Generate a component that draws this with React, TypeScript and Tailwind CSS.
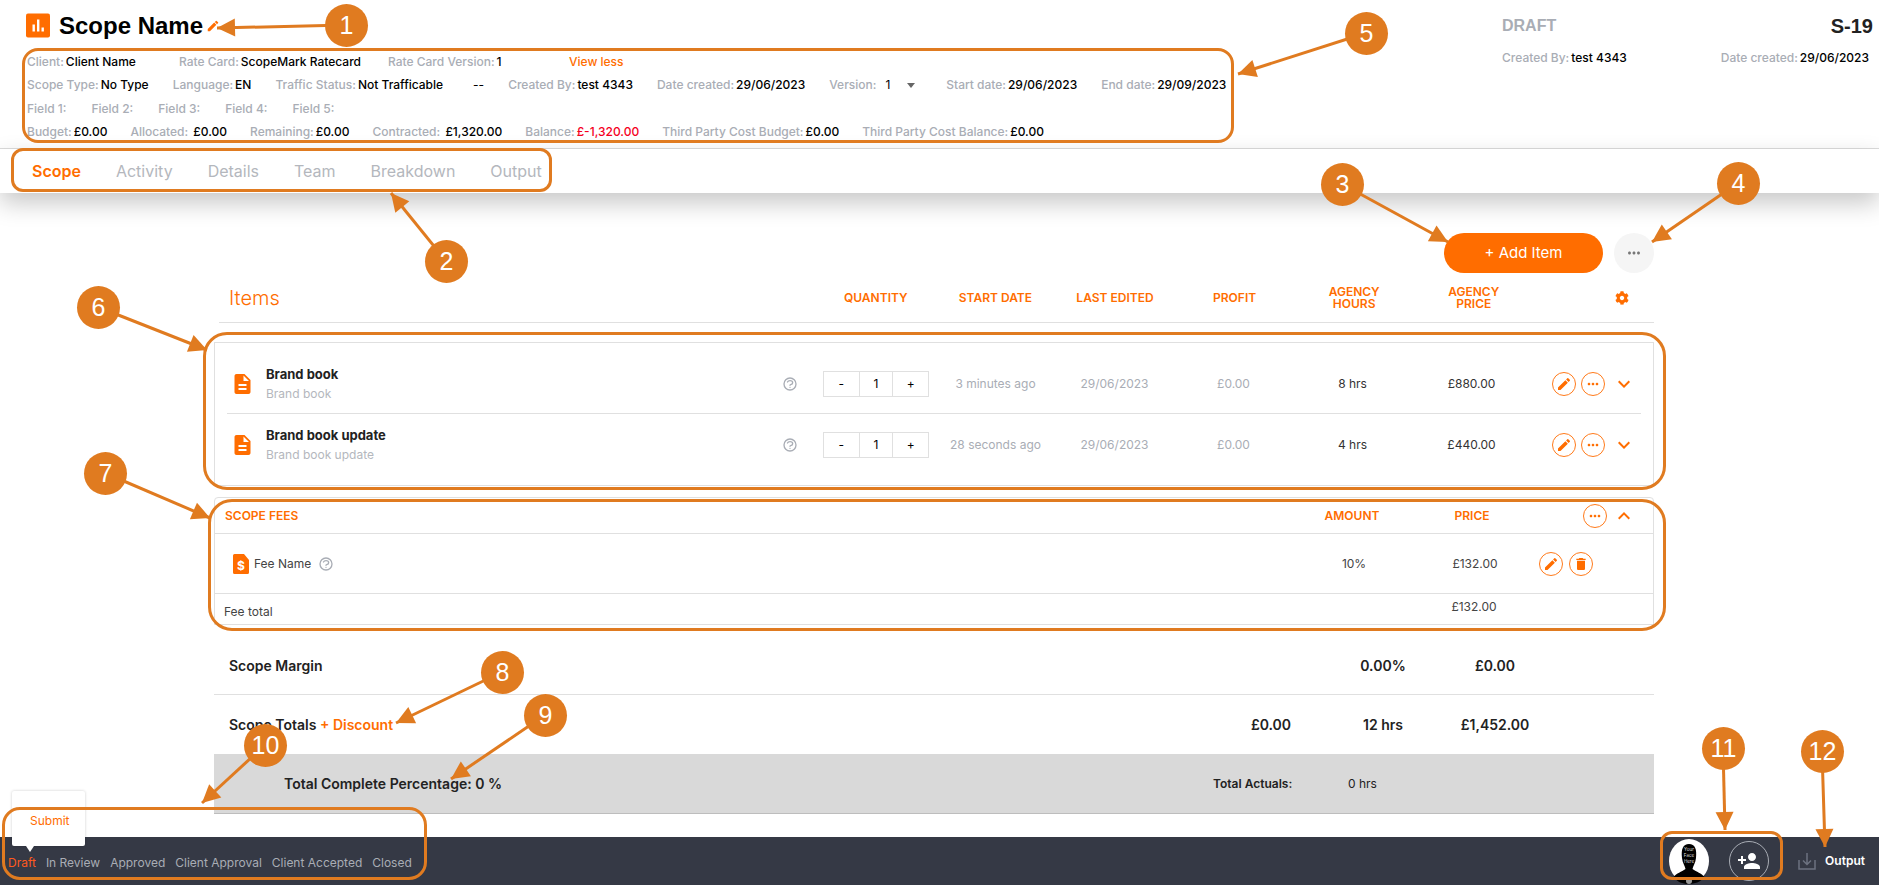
import { MdDelete, MdDescription, MdEdit, MdExpandLess, MdExpandMore, MdMoreHoriz, MdPersonAdd } from 'react-icons/md';
import { FaCog } from 'react-icons/fa';
import { HiOutlineQuestionMarkCircle } from 'react-icons/hi';

const Info = ({ label, value, valueClass = 'text-black' }: { label: string; value?: string; valueClass?: string }) => (
  <span className="whitespace-nowrap">
    <span className="font-medium text-[#a9adb5]">{label}</span>
    {value && <span className={`ml-[2px] font-medium ${valueClass}`}>{value}</span>}
  </span>
);

const Meta = () => (
  <div className="ml-[1px] flex flex-col text-[12px] leading-[23.4px]">
    <div className="mt-[12px] flex h-[23.4px]">
      <div className="w-[152px]"><Info label="Client:" value="Client Name" /></div>
      <div className="w-[209px]"><Info label="Rate Card:" value="ScopeMark Ratecard" /></div>
      <div className="w-[181px]"><Info label="Rate Card Version:" value="1" /></div>
      <span className="font-medium text-[#ff6d00]">View less</span>
    </div>
    <div className="flex h-[23.4px] gap-[24px]">
      <Info label="Scope Type:" value="No Type" />
      <Info label="Language:" value="EN" />
      <Info label="Traffic Status:" value="Not Trafficable" />
      <span className="ml-[6px] text-black">--</span>
      <Info label="Created By:" value="test 4343" />
      <Info label="Date created:" value="29/06/2023" />
      <span className="flex w-[93px] items-center">
        <span className="font-medium text-[#a9adb5]">Version:</span>
        <span className="ml-[9px] text-black">1</span>
        <span className="ml-[17px] h-0 w-0 border-x-[4px] border-t-[5px] border-x-transparent border-t-[#666]" />
      </span>
      <Info label="Start date:" value="29/06/2023" />
      <Info label="End date:" value="29/09/2023" />
    </div>
    <div className="flex h-[23.4px] gap-[25px]">
      {['Field 1:', 'Field 2:', 'Field 3:', 'Field 4:', 'Field 5:'].map((f) => (
        <Info key={f} label={f} />
      ))}
    </div>
    <div className="flex h-[23.4px] gap-[23px]">
      <Info label="Budget:" value="£0.00" />
      <Info label="Allocated:" value=" £0.00" />
      <Info label="Remaining:" value="£0.00" />
      <Info label="Contracted:" value=" £1,320.00" />
      <Info label="Balance:" value="£-1,320.00" valueClass="text-[#f5001e]" />
      <Info label="Third Party Cost Budget:" value="£0.00" />
      <Info label="Third Party Cost Balance:" value="£0.00" />
    </div>
  </div>
);

const Header = () => (
  <header className="flex h-[149px] justify-between border-b border-[#dcdcdc] pl-[26px] pr-[6px] pt-[13px]">
    <div>
      <div className="flex h-[25px] items-center">
        <svg viewBox="0 0 24 24" className="h-[25px] w-[24px]">
          <rect width="24" height="24" rx="2" fill="#ff6d00" />
          <path d="M6.5 11h2.4v7H6.5zM11 6h2.4v12H11zM15.5 14h2.4v4h-2.4z" fill="#fff" />
        </svg>
        <h1 className="ml-[9px] font-['Liberation_Sans',sans-serif] text-[24px] font-bold leading-none text-black">
          Scope Name
        </h1>
        <MdEdit className="ml-[3px] text-[14px] text-[#ff6d00]" />
      </div>
      <Meta />
    </div>
    <div className="w-[371px]">
      <div className="flex h-[25px] items-center justify-between">
        <span className="font-['Liberation_Sans',sans-serif] text-[16px] font-bold text-[#a9adb5]">DRAFT</span>
        <span className="font-['Liberation_Sans',sans-serif] text-[20px] font-bold text-[#222]">S-19</span>
      </div>
      <div className="mt-[8px] flex justify-between pr-[4px] text-[12px] leading-[23px]">
        <Info label="Created By:" value="test 4343" />
        <Info label="Date created:" value="29/06/2023" />
      </div>
    </div>
  </header>
);

const Tabs = () => (
  <nav className="relative z-10 flex h-[44px] items-center gap-[35px] bg-white pl-[32px] text-[16px] shadow-[0_10px_24px_rgba(0,0,0,0.22)]">
    {['Scope', 'Activity', 'Details', 'Team', 'Breakdown', 'Output'].map((t, i) => (
      <span key={t} className={i === 0 ? 'font-semibold text-[#ff6d00]' : 'text-[#b4b7bd]'}>
        {t}
      </span>
    ))}
  </nav>
);

const CircleButton = ({ children }: { children: React.ReactNode }) => (
  <span className="flex h-[24px] w-[24px] items-center justify-center rounded-full border border-[#ff7a1a] text-[16px] text-[#ff6d00]">
    {children}
  </span>
);

const Help = () => <HiOutlineQuestionMarkCircle className="text-[16px] text-[#a9adb5]" />;

const TableHead = () => (
  <div className="flex h-[50px] items-center border-b border-[#e0e0e0] pl-[10px] text-[12px] font-semibold leading-[12px] text-[#ff6d00]">
    <span className="w-[587px] text-[20px] font-light">Items</span>
    {['QUANTITY', 'START DATE', 'LAST EDITED', 'PROFIT'].map((h) => (
      <span key={h} className="w-[119.6px] whitespace-nowrap text-center">
        {h}
      </span>
    ))}
    <span className="w-[119.6px] text-center">AGENCY<br />HOURS</span>
    <span className="w-[119.6px] text-center">AGENCY<br />PRICE</span>
    <FaCog className="ml-[81px] text-[14px]" />
  </div>
);

const Stepper = () => (
  <div className="grid h-[26px] w-[106px] grid-cols-3 border border-[#e0e0e0] text-center text-[12px] leading-[24px] text-black">
    <span>-</span>
    <span className="border-x border-[#e0e0e0]">1</span>
    <span>+</span>
  </div>
);

const ItemRow = ({ name, edited, hours, price, last }: { name: string; edited: string; hours: string; price: string; last?: boolean }) => (
  <div className={`flex items-center pl-[8px] text-[12px] ${last ? 'h-[62px]' : 'h-[60px] border-b border-[#e0e0e0]'}`}>
    <MdDescription className="w-[31px] -translate-x-[7px] pr-[2px] text-[24px] text-[#ff6d00]" />
    <div className="w-[516px]">
      <div className="text-[13px] font-bold leading-[20px] text-[#222]">{name}</div>
      <div className="leading-[20px] text-[#b4b7bd]">{name}</div>
    </div>
    <Help />
    <span className="w-[25px]" />
    <Stepper />
    <span className="w-[7px]" />
    <span className="w-[119px] text-center text-[#a9adb5]">{edited}</span>
    <span className="w-[119px] text-center text-[#a9adb5]">29/06/2023</span>
    <span className="w-[119px] text-center text-[#a9adb5]">£0.00</span>
    <span className="w-[119px] text-center text-[#333]">{hours}</span>
    <span className="w-[119px] text-center text-[#333]">{price}</span>
    <span className="ml-[21px] flex items-center gap-[5px]">
      <CircleButton><MdEdit /></CircleButton>
      <CircleButton><MdMoreHoriz /></CircleButton>
    </span>
    <MdExpandMore className="ml-[7px] text-[24px] text-[#ff6d00]" />
  </div>
);

const Fees = () => (
  <section className="mt-[11px] h-[128px] rounded-t-[4px] border border-[#e0e0e0] text-[12px]">
    <div className="flex h-[36px] items-center border-b border-[#e0e0e0] pl-[10px] text-[#ff6d00]">
      <span className="w-[1097px] font-semibold">SCOPE FEES</span>
      <span className="w-[60px] text-center font-semibold">AMOUNT</span>
      <span className="ml-[60px] w-[60px] text-center font-semibold">PRICE</span>
      <span className="ml-[81px]"><CircleButton><MdMoreHoriz /></CircleButton></span>
      <MdExpandLess className="ml-[5px] text-[24px]" />
    </div>
    <div className="flex h-[60px] items-center border-b border-[#e0e0e0] pl-[18px] text-[#444]">
      <svg viewBox="0 0 16 20" className="h-[20px] w-[16px]">
        <path d="M1.5 0H11l5 6v12.5a1.500 1.500 0 0 1-1.500 1.500h-13A1.500 1.500 0 0 1 0 18.500v-17A1.500 1.500 0 0 1 1.500 0z" fill="#ff6d00" />
        <text x="8" y="16" fontSize="12" fontWeight="700" textAnchor="middle" fill="#fff">$</text>
      </svg>
      <span className="ml-[5px] w-[64px] whitespace-nowrap">Fee Name</span>
      <Help />
      <span className="ml-[990px] w-[60px] text-center">10%</span>
      <span className="ml-[61px] w-[60px] text-center">£132.00</span>
      <span className="ml-[34px] flex gap-[6px]">
        <CircleButton><MdEdit /></CircleButton>
        <CircleButton><MdDelete /></CircleButton>
      </span>
    </div>
    <div className="flex h-[30px] justify-between text-[#444]">
      <span className="ml-[9px] self-end pb-[3px]">Fee total</span>
      <span className="mr-[149px] w-[60px] pt-[4px] text-center">£132.00</span>
    </div>
  </section>
);

const TotalRow = ({ label, cells, border }: { label: React.ReactNode; cells: string[]; border?: boolean }) => (
  <div className={`grid h-[59px] grid-cols-[1001px_112px_112px_112px_1fr] items-center text-[14px] font-semibold text-[#222] ${border ? 'border-b border-[#e0e0e0]' : ''}`}>
    <span className="pl-[15px]">{label}</span>
    {cells.map((c, i) => (
      <span key={i} className="text-center">{c}</span>
    ))}
  </div>
);

const Main = () => (
  <main className="ml-[214px] w-[1440px] flex-1">
    <div className="flex justify-end gap-[11px] pt-[40px]">
      <button className="h-[40px] w-[159px] rounded-full bg-[#ff6d00] text-[15px] text-white">+ Add Item</button>
      <span className="flex h-[40px] w-[40px] items-center justify-center rounded-full bg-[#f5f5f5] text-[18px] text-[#777]">
        <MdMoreHoriz />
      </span>
    </div>
    <div className="ml-[5px]"><TableHead /></div>
    <section className="mt-[19px] h-[144px] border-y border-l border-r border-[#e0e0e0] px-[12px] pt-[11px]">
      <ItemRow name="Brand book" edited="3 minutes ago" hours="8 hrs" price="£880.00" />
      <ItemRow name="Brand book update" edited="28 seconds ago" hours="4 hrs" price="£440.00" last />
    </section>
    <Fees />
    <div className="mt-[11px]">
      <TotalRow label="Scope Margin" cells={['', '0.00%', '£0.00']} border />
      <TotalRow
        label={<>Scope Totals <span className="text-[#ff6d00]">+ Discount</span></>}
        cells={['£0.00', '12 hrs', '£1,452.00']}
      />
    </div>
    <div className="flex h-[60px] items-center border-b border-[#bdbdbd] bg-[#d9d9d9] pl-[70px] text-[#222]">
      <span className="w-[929px] text-[14px] font-semibold">Total Complete Percentage: 0 %</span>
      <span className="w-[135px] text-[12px] font-semibold">Total Actuals:</span>
      <span className="text-[12px]">0 hrs</span>
    </div>
  </main>
);

const Footer = () => (
  <footer className="relative flex h-[48px] items-center justify-between bg-[#353945] pl-[8px] pr-[14px] text-[12px]">
    <div className="absolute bottom-[39px] left-[12px] flex h-[55px] w-[73px] items-center rounded-[2px] bg-white pl-[18px] pt-[5px] text-[#ff6d00] shadow-[0_0_3px_rgba(0,0,0,0.2)]">
      Submit
      <span className="absolute -bottom-[6px] left-[14px] h-0 w-0 border-x-[4px] border-t-[6px] border-x-transparent border-t-white" />
    </div>
    <div className="flex gap-[10px] pt-[4px] text-[#a9adb5]">
      <span className="text-[#ff5a1f]">Draft</span>
      {['In Review', 'Approved', 'Client Approval', 'Client Accepted', 'Closed'].map((s) => (
        <span key={s}>{s}</span>
      ))}
    </div>
    <div className="flex items-center">
      <svg viewBox="0 0 40 45" className="h-[45px] w-[40px] self-end">
        <ellipse cx="20" cy="22" rx="20" ry="22" fill="#fff" />
        <path d="M20 5c6 0 8 5 7 14-.5 5-3 8-3.500 11 4 3 9 4 12 8-4 5-10 7-16 7s-11-2-15-7c3-4 8-5 12-8-.5-3-3-6-3.500-11C12 10 14 5 20 5z" fill="#000" />
        <text x="20" y="12" fontSize="4.500" textAnchor="middle" fill="#ddd">Your</text>
        <text x="20" y="18" fontSize="4.500" textAnchor="middle" fill="#ddd">Face</text>
        <text x="20" y="24" fontSize="4.500" textAnchor="middle" fill="#ddd">Here</text>
        <circle cx="20" cy="42" r="3" fill="#999" />
      </svg>
      <span className="ml-[20px] flex h-[40px] w-[40px] items-center justify-center rounded-full border border-[#a9adb5] text-[24px] text-white">
        <MdPersonAdd />
      </span>
      <svg viewBox="0 0 18 18" className="ml-[29px] h-[18px] w-[18px]" fill="none" stroke="#6c7280" strokeWidth="1.500">
        <path d="M1 8v9h16V8M9 1v11M5 8.500l4 4 4-4" />
      </svg>
      <span className="ml-[9px] font-semibold text-white">Output</span>
    </div>
  </footer>
);

// annotation layer drawn over the finished screen
const ORANGE = '#e07b20';

const boxes = [
  'left-[22px] top-[48px] h-[95px] w-[1212px] rounded-[16px]',
  'left-[11px] top-[148px] h-[44px] w-[541px] rounded-[12px]',
  'left-[203px] top-[332px] h-[158px] w-[1463px] rounded-[24px]',
  'left-[208px] top-[499px] h-[132px] w-[1458px] rounded-[24px]',
  'left-[2px] top-[807px] h-[73px] w-[425px] rounded-[18px]',
  'left-[1660px] top-[831px] h-[49px] w-[123px] rounded-[12px]',
];

const callouts = [
  { n: 1, x: 346, y: 25, tx: 217, ty: 28, pos: 'left-[325px] top-[4px]' },
  { n: 2, x: 446, y: 261, tx: 391, ty: 193, pos: 'left-[425px] top-[240px]' },
  { n: 3, x: 1342, y: 184, tx: 1448, ty: 242, pos: 'left-[1321px] top-[163px]' },
  { n: 4, x: 1738, y: 183, tx: 1652, ty: 242, pos: 'left-[1717px] top-[162px]' },
  { n: 5, x: 1366, y: 33, tx: 1238, ty: 74, pos: 'left-[1345px] top-[12px]' },
  { n: 6, x: 98, y: 307, tx: 207, ty: 350, pos: 'left-[77px] top-[286px]' },
  { n: 7, x: 105, y: 473, tx: 210, ty: 518, pos: 'left-[84px] top-[452px]' },
  { n: 8, x: 502, y: 672, tx: 396, ty: 723, pos: 'left-[481px] top-[651px]' },
  { n: 9, x: 545, y: 715, tx: 451, ty: 779, pos: 'left-[524px] top-[694px]' },
  { n: 10, x: 265, y: 745, tx: 202, ty: 803, pos: 'left-[244px] top-[724px]' },
  { n: 11, x: 1723, y: 748, tx: 1725, ty: 830, pos: 'left-[1702px] top-[727px]' },
  { n: 12, x: 1822, y: 751, tx: 1825, ty: 847, pos: 'left-[1801px] top-[730px]' },
];

const arrowHead = (x: number, y: number, tx: number, ty: number) => {
  const a = Math.atan2(ty - y, tx - x);
  const len = 18;
  const w = 9;
  const bx = tx - Math.cos(a) * len;
  const by = ty - Math.sin(a) * len;
  const p1 = `${bx - Math.sin(a) * w},${by + Math.cos(a) * w}`;
  const p2 = `${bx + Math.sin(a) * w},${by - Math.cos(a) * w}`;
  return `${tx},${ty} ${p1} ${p2}`;
};

const Annotations = () => (
  <div className="pointer-events-none absolute inset-0 z-20">
    {boxes.map((b) => (
      <div key={b} className={`absolute border-[3px] border-[#e07b20] ${b}`} />
    ))}
    <svg viewBox="0 0 1879 885" className="absolute inset-0 h-[885px] w-[1879px]">
      {callouts.map((c) => (
        <g key={c.n}>
          <line x1={c.x} y1={c.y} x2={c.tx} y2={c.ty} stroke={ORANGE} strokeWidth="3" />
          <polygon points={arrowHead(c.x, c.y, c.tx, c.ty)} fill={ORANGE} />
        </g>
      ))}
    </svg>
    {callouts.map((c) => (
      <div
        key={c.n}
        className={`absolute flex h-[43px] w-[43px] items-center justify-center rounded-full bg-[#e07b20] font-['Liberation_Sans',sans-serif] text-[25px] text-white ${c.pos}`}
      >
        {c.n}
      </div>
    ))}
  </div>
);

export default function App() {
  return (
    <div className="relative flex h-[885px] w-[1879px] flex-col overflow-hidden bg-white font-['Inter',sans-serif]">
      <Header />
      <Tabs />
      <Main />
      <Footer />
      <Annotations />
    </div>
  );
}
